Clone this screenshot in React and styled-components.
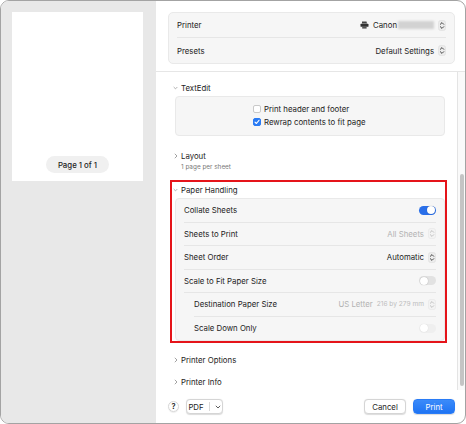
import React from "react";
import styled, { createGlobalStyle } from "styled-components";

const Global = createGlobalStyle`
  html, body { margin: 0; padding: 0; background: #ffffff; }
  body {
    font-family: Inter, "Noto Sans", "Liberation Sans", sans-serif;
    font-size: 7.8px;
    color: #232323;
    -webkit-font-smoothing: antialiased;
  }
`;

const Window = styled.div`
  box-sizing: border-box;
  width: 466px;
  height: 424px;
  border: 1px solid #a3a3a3;
  border-radius: 9px;
  overflow: hidden;
  display: flex;
  background: #fff;
`;

const Sidebar = styled.div`
  width: 155px;
  flex: none;
  background: #e8e8e8;
  padding: 11px 0 0 11px;
  box-sizing: border-box;
`;

const Paper = styled.div`
  width: 131px;
  height: 169px;
  background: #fff;
  display: flex;
  align-items: flex-end;
  justify-content: center;
  padding-bottom: 8px;
  box-sizing: border-box;
`;

const PagePill = styled.div`
  width: 63px;
  height: 17px;
  border-radius: 9px;
  background: #f0f0f0;
  display: flex;
  align-items: center;
  justify-content: center;
  font-weight: 500;
  font-size: 7.8px;
`;

const Main = styled.div`
  flex: 1;
  display: flex;
  flex-direction: column;
  min-width: 0;
`;

const Header = styled.div`
  padding: 11px 10px 7px 12px;
  border-bottom: 1px solid #e6e6e6;
`;

const Group = styled.div`
  background: #f6f6f6;
  border: 1px solid #e9e9e9;
  border-radius: 5px;
  padding: 0 8px;
`;

const Row = styled.div`
  display: flex;
  align-items: center;
  justify-content: space-between;
  height: ${(p) => p.$h || 23.5}px;
  margin-left: ${(p) => (p.$indent ? 10 : 0)}px;
  border-bottom: 1px solid #e6e6e6;
  box-sizing: border-box;
  &:last-child { border-bottom: none; }
`;

const Label = styled.span`
  color: #232323;
`;

const Value = styled.span`
  display: flex;
  align-items: center;
  gap: 4px;
  color: ${(p) => (p.$muted ? "#b3b3b3" : "#232323")};
`;

const Small = styled.span`
  font-size: 6.6px;
  color: #bdbdbd;
`;

const Blur = styled.span`
  display: inline-block;
  width: 36px;
  height: 8px;
  background: #d2d2d2;
  filter: blur(1.2px);
  margin-left: -3px;
`;

const ScrollArea = styled.div`
  flex: 1;
  display: flex;
  min-height: 0;
`;

const Content = styled.div`
  flex: 1;
  padding: 7px 10px 0 14px;
`;

const Track = styled.div`
  width: 8px;
  flex: none;
  border-left: 1px solid #e4e4e4;
  background: #fafafa;
  box-sizing: border-box;
  padding-top: 102px;
  padding-bottom: 4px;
  display: flex;
  justify-content: center;
`;

const Thumb = styled.div`
  width: 4px;
  height: 212px;
  border-radius: 2px;
  background: #c4c4c4;
`;

const Section = styled.div`
  border: 2px solid ${(p) => (p.$highlight ? "#e5141a" : "transparent")};
  margin-top: ${(p) => p.$top || 0}px;
`;

const Heading = styled.div`
  display: flex;
  align-items: center;
  height: ${(p) => p.$h || 14}px;
  gap: 3px;
  padding-left: 1px;
`;

const Chevron = styled.span`
  width: 5px;
  display: flex;
  justify-content: center;
`;

const Sub = styled.div`
  font-size: 6.4px;
  color: #7a7a7a;
  padding-left: 9px;
  height: 8px;
  line-height: 8px;
`;

const Panel = styled.div`
  margin-left: 3px;
  margin-top: 1px;
  background: #f6f6f6;
  border: 1px solid #e9e9e9;
  border-radius: 4px;
  padding: ${(p) => p.$pad || "0 8px"};
`;

const CheckList = styled.div`
  display: flex;
  flex-direction: column;
  gap: 4px;
  padding-left: 77px;
  padding-top: 7px;
  height: 38px;
  box-sizing: border-box;
`;

const CheckRow = styled.label`
  display: flex;
  align-items: center;
  gap: 3px;
  height: 9px;
`;

const Box = styled.span`
  width: 8px;
  height: 8px;
  border-radius: 2px;
  box-sizing: border-box;
  border: 1px solid ${(p) => (p.$on ? "#2a7bf4" : "#c9c9c9")};
  background: ${(p) => (p.$on ? "#2a7bf4" : "#fff")};
  display: flex;
  align-items: center;
  justify-content: center;
`;

const Toggle = styled.span`
  width: 17px;
  height: 9px;
  border-radius: 5px;
  background: ${(p) => (p.$on ? "#2a6fe9" : p.$disabled ? "#efefef" : "#e2e2e2")};
  display: flex;
  align-items: center;
  justify-content: ${(p) => (p.$on ? "flex-end" : "flex-start")};
  padding: 0 1px;
  box-sizing: border-box;
  &::after {
    content: "";
    width: 8px;
    height: 8px;
    border-radius: 50%;
    background: #fff;
    box-shadow: 0 0 1px rgba(0, 0, 0, ${(p) => (p.$disabled ? 0.15 : 0.35)});
  }
`;

const Footer = styled.div`
  height: 33px;
  display: flex;
  align-items: center;
  padding: 0 10px 0 12px;
  gap: 7px;
`;

const Help = styled.span`
  width: 11px;
  height: 11px;
  border-radius: 50%;
  border: 1px solid #d6d6d6;
  box-sizing: border-box;
  display: flex;
  align-items: center;
  justify-content: center;
  font-size: 7.5px;
  font-weight: 600;
  box-shadow: 0 0.5px 1px rgba(0,0,0,0.12);
`;

const Button = styled.button`
  font-family: inherit;
  font-size: 7.8px;
  height: 15px;
  width: ${(p) => p.$w || 42}px;
  border-radius: 4px;
  border: 1px solid ${(p) => (p.$primary ? "#2a7cf6" : "#d5d5d5")};
  background: ${(p) => (p.$primary ? "linear-gradient(#3b8bfa, #1f74f3)" : "#fff")};
  color: ${(p) => (p.$primary ? "#fff" : "#232323")};
  box-shadow: 0 0.5px 1px rgba(0,0,0,0.14);
  padding: 0;
  display: flex;
  align-items: center;
  justify-content: center;
  gap: 5px;
  margin-left: ${(p) => p.$ml || 0};
`;

const Split = styled.span`
  width: 1px;
  height: 9px;
  background: #d9d9d9;
`;

const Down = ({ c = "#8a8a8a" }) => (
  <svg width="6" height="4" viewBox="0 0 6 4">
    <path d="M0.8 0.8 L3 3 L5.2 0.8" fill="none" stroke={c} strokeWidth="0.8" />
  </svg>
);

const Right = () => (
  <svg width="4" height="6" viewBox="0 0 4 6">
    <path d="M0.8 0.8 L3 3 L0.8 5.2" fill="none" stroke="#8a8a8a" strokeWidth="0.8" />
  </svg>
);

const Stepper = ({ muted }) => (
  <svg width="8" height="11" viewBox="0 0 8 11">
    <rect x="0.5" y="0.5" width="7" height="10" rx="2" fill={muted ? "#f3f3f3" : "#ececec"} stroke={muted ? "#e6e6e6" : "#dedede"} strokeWidth="0.6" />
    <path d="M2.3 4.3 L4 2.6 L5.7 4.3 M2.3 6.7 L4 8.4 L5.7 6.7" fill="none" stroke={muted ? "#bcbcbc" : "#333"} strokeWidth="0.9" strokeLinecap="round" strokeLinejoin="round" />
  </svg>
);

const PrinterIcon = () => (
  <svg width="9" height="8" viewBox="0 0 9 8">
    <path d="M2 0.5 H6.5 L7 2.5 H2 Z" fill="#444" />
    <rect x="0.5" y="2.8" width="8" height="3" rx="0.6" fill="#333" />
    <rect x="2.2" y="5.2" width="4.4" height="2.4" fill="#555" />
  </svg>
);

const Tick = () => (
  <svg width="6" height="6" viewBox="0 0 6 6">
    <path d="M1 3.1 L2.4 4.5 L5 1.3" fill="none" stroke="#fff" strokeWidth="1.1" strokeLinecap="round" strokeLinejoin="round" />
  </svg>
);

const handling = [
  { label: "Collate Sheets", control: <Toggle $on /> },
  { label: "Sheets to Print", control: <Value $muted>All Sheets <Stepper muted /></Value> },
  { label: "Sheet Order", control: <Value>Automatic <Stepper /></Value> },
  { label: "Scale to Fit Paper Size", control: <Toggle /> },
  {
    label: "Destination Paper Size",
    indent: true,
    control: (
      <Value $muted>
        US Letter <Small>216 by 279 mm</Small> <Stepper muted />
      </Value>
    ),
  },
  { label: "Scale Down Only", indent: true, control: <Toggle $disabled /> },
];

export default function App() {
  return (
    <>
      <Global />
      <Window>
        <Sidebar>
          <Paper>
            <PagePill>Page 1 of 1</PagePill>
          </Paper>
        </Sidebar>
        <Main>
          <Header>
            <Group>
              <Row $h={25}>
                <Label>Printer</Label>
                <Value>
                  <PrinterIcon /> Canon<Blur /> <Stepper />
                </Value>
              </Row>
              <Row $h={25}>
                <Label>Presets</Label>
                <Value>
                  Default Settings <Stepper />
                </Value>
              </Row>
            </Group>
          </Header>
          <ScrollArea>
            <Content>
              <Section>
                <Heading>
                  <Chevron><Down /></Chevron>TextEdit
                </Heading>
                <Panel $pad="0">
                  <CheckList>
                    <CheckRow><Box />Print header and footer</CheckRow>
                    <CheckRow><Box $on><Tick /></Box>Rewrap contents to fit page</CheckRow>
                  </CheckList>
                </Panel>
              </Section>
              <Section $top={9}>
                <Heading>
                  <Chevron><Right /></Chevron>Layout
                </Heading>
                <Sub>1 page per sheet</Sub>
              </Section>
              <Section $top={7} $highlight>
                <Heading $h={15}>
                  <Chevron><Down /></Chevron>Paper Handling
                </Heading>
                <Panel>
                  {handling.map((r) => (
                    <Row key={r.label} $indent={r.indent}>
                      <Label>{r.label}</Label>
                      {r.control}
                    </Row>
                  ))}
                </Panel>
              </Section>
              <Section $top={8}>
                <Heading>
                  <Chevron><Right /></Chevron>Printer Options
                </Heading>
              </Section>
              <Section $top={4}>
                <Heading>
                  <Chevron><Right /></Chevron>Printer Info
                </Heading>
              </Section>
            </Content>
            <Track>
              <Thumb />
            </Track>
          </ScrollArea>
          <Footer>
            <Help>?</Help>
            <Button $w={37}>
              PDF <Split /> <Down c="#333" />
            </Button>
            <Button $ml="auto">Cancel</Button>
            <Button $primary>Print</Button>
          </Footer>
        </Main>
      </Window>
    </>
  );
}
